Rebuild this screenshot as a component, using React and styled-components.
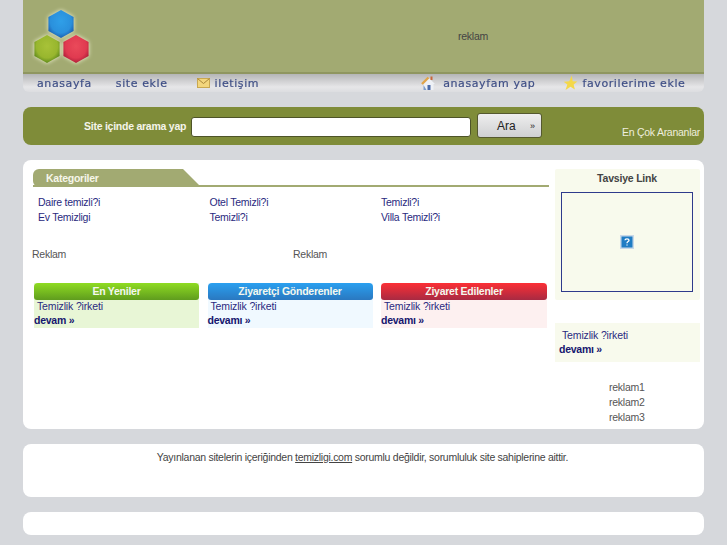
import React from "react";
import styled, { createGlobalStyle } from "styled-components";

const GlobalStyle = createGlobalStyle`
  html, body {
    margin: 0;
    padding: 0;
    height: 545px;
    overflow: hidden;
    background: #d6d8dc;
    font-family: "Liberation Sans", Arial, sans-serif;
    font-size: 10.5px;
    letter-spacing: -0.25px;
    color: #444;
  }
`;

const Page = styled.div`
  width: 681px;
  margin: 0 0 0 23px;
`;

const Header = styled.div`
  height: 72px;
  background: #a2aa72;
  display: flex;
`;

const LogoWrap = styled.div`
  width: 72px;
  padding: 7px 0 0 8px;
`;

const HeaderAd = styled.div`
  flex: 1;
  padding: 30px 0 0 355px;
  line-height: 12px;
  color: #444;
`;

const Nav = styled.div`
  height: 20px;
  display: flex;
  align-items: center;
  border-radius: 0 0 6px 6px;
  background: linear-gradient(#8f9660 0, #8f9660 2px, #b4b5b6 2px, #d0d0d2 9px, #e6e6e8 15px, #dcdde0 20px);
  font-family: "DejaVu Sans", Verdana, sans-serif;
  font-size: 11px;
  letter-spacing: 0.6px;
  color: #3f4f86;
  -webkit-text-stroke: 0.2px #3f4f86;
  padding-top: 2px;
  box-sizing: border-box;
`;

const NavItem = styled.span`
  display: flex;
  align-items: center;
  gap: ${(p) => p.$gap || 5}px;
  margin-left: ${(p) => p.$left}px;
  white-space: nowrap;
  filter: blur(0.25px);
`;

const SearchBar = styled.div`
  height: 38px;
  margin-top: 15px;
  background: #7f8c39;
  border-radius: 8px;
  display: flex;
  align-items: flex-start;
  position: relative;
`;

const SearchLabel = styled.label`
  margin: 13px 0 0 61px;
  width: 107px;
  font-weight: bold;
  line-height: 13px;
  color: #f4f4ea;
  white-space: nowrap;
`;

const SearchInput = styled.div`
  width: 278px;
  height: 18px;
  margin-top: 10px;
  background: #fff;
  border: 1px solid #4e5428;
  border-radius: 3px;
`;

const SearchButton = styled.div`
  width: 63px;
  height: 23px;
  margin: 6px 0 0 6px;
  border: 1px solid #55592f;
  border-radius: 3px;
  background: linear-gradient(#eeeeee, #cfd0d2);
  display: flex;
  align-items: center;
  font-size: 12px;
  letter-spacing: 0;
  color: #222;
`;

const ButtonLabel = styled.span`
  margin-left: 19px;
  width: 33px;
`;

const ButtonArrows = styled.span`
  font-size: 9px;
`;

const TopSearches = styled.span`
  position: absolute;
  right: 4px;
  bottom: 7px;
  line-height: 12px;
  color: #eeeede;
  letter-spacing: -0.27px;
`;

const Panel = styled.div`
  margin-top: ${(p) => p.$top}px;
  height: ${(p) => p.$height}px;
  background: #fff;
  border-radius: 8px;
`;

const MainPanel = styled(Panel)`
  display: flex;
  padding: 9px 4px 0 9px;
  box-sizing: border-box;
`;

const LeftColumn = styled.div`
  width: 517px;
`;

const RightColumn = styled.div`
  width: 145px;
  margin-left: 6px;
`;

const TabRow = styled.div`
  height: 18px;
  border-bottom: 2px solid #a2aa72;
  box-sizing: border-box;
  margin-left: 1px;
`;

const Tab = styled.div`
  width: 168px;
  height: 18px;
  background: #a2aa72;
  border-radius: 6px 6px 0 6px;
  clip-path: polygon(0 0, 150px 0, 168px 18px, 0 18px);
  color: #f6f6ea;
  font-weight: bold;
  line-height: 18px;
  padding-left: 13px;
  box-sizing: border-box;
`;

const CategoryGrid = styled.div`
  display: grid;
  grid-template-columns: repeat(3, 171.5px);
  margin: 8px 0 0 6px;
`;

const CategoryLink = styled.a`
  height: 14.5px;
  line-height: 14.5px;
  color: #2a2a80;
`;

const AdRow = styled.div`
  display: flex;
  margin-top: 23px;
  line-height: 14px;
  color: #555;
`;

const AdSlot = styled.span`
  flex: 0 0 261px;
`;

const BoxRow = styled.div`
  display: flex;
  gap: 8.5px;
  margin: 22px 0 0 2px;
`;

const Box = styled.div`
  flex: 0 0 ${(p) => p.$width}px;
  height: 45px;
  background: ${(p) => p.$tint};
`;

const BoxTitle = styled.div`
  height: 17px;
  border-radius: 4px 4px 3px 3px;
  background: linear-gradient(${(p) => p.$from}, ${(p) => p.$to});
  color: #f4f8ee;
  font-weight: bold;
  line-height: 16px;
  text-align: center;
`;

const EntryLink = styled.div`
  padding-left: ${(p) => p.$pad}px;
  margin-top: -1px;
  height: 14px;
  line-height: 14px;
  letter-spacing: -0.15px;
  color: #2a2a80;
`;

const MoreLink = styled.div`
  height: 14px;
  line-height: 14px;
  font-weight: bold;
  color: #16166e;
`;

const AdviceBox = styled.div`
  height: 131px;
  background: #f8faed;
  padding: 0 7px 0 6px;
  border-radius: 2px;
  box-sizing: border-box;
`;

const AdviceTitle = styled.div`
  height: 23px;
  line-height: 19px;
  text-align: center;
  font-weight: bold;
  letter-spacing: -0.2px;
  color: #444;
`;

const AdviceFrame = styled.div`
  height: 100px;
  border: 1px solid #2e3a8c;
  box-sizing: border-box;
  display: flex;
  align-items: center;
  justify-content: center;
`;

const SideEntry = styled.div`
  margin-top: 23px;
  height: 39px;
  background: #f8faed;
  padding: 6px 0 0 4px;
  box-sizing: border-box;
`;

const SideAds = styled.div`
  margin: 18px 0 0 54px;
  line-height: 15px;
  color: #555;
`;

const FooterText = styled.div`
  padding-top: 7px;
  text-align: center;
  line-height: 13px;
  color: #444;
  letter-spacing: -0.28px;
  margin-left: -2px;
`;

const FooterLink = styled.a`
  text-decoration: underline;
  color: #444;
`;

const LogoSvg = styled.svg`
  display: block;
  filter: drop-shadow(0 0 2px #f2f4d4) blur(0.4px);
`;

// logo: three hexagons
const hex = (cx, cy, r) => {
  const h = r * 0.9;
  return `${cx},${cy - r} ${cx + h},${cy - r / 2} ${cx + h},${cy + r / 2} ${cx},${cy + r} ${cx - h},${cy + r / 2} ${cx - h},${cy - r / 2}`;
};

const Logo = () => (
  <LogoSvg width="62" height="62" viewBox="0 0 62 62">
    <defs>
      <radialGradient id="blueHex" cx="0.5" cy="0.4" r="0.6">
        <stop offset="0" stopColor="#2f9fe8" />
        <stop offset="0.7" stopColor="#2a90dc" />
        <stop offset="1" stopColor="#1c5fb0" />
      </radialGradient>
      <radialGradient id="greenHex" cx="0.5" cy="0.4" r="0.6">
        <stop offset="0" stopColor="#a8c238" />
        <stop offset="0.7" stopColor="#98b62e" />
        <stop offset="1" stopColor="#5f8a1c" />
      </radialGradient>
      <radialGradient id="redHex" cx="0.5" cy="0.4" r="0.6">
        <stop offset="0" stopColor="#ea4a5a" />
        <stop offset="0.7" stopColor="#e03a50" />
        <stop offset="1" stopColor="#b0203a" />
      </radialGradient>
    </defs>
    <polygon points={hex(30, 17, 14)} fill="url(#blueHex)" />
    <polygon points={hex(16, 42, 14)} fill="url(#greenHex)" />
    <polygon points={hex(45, 42, 14)} fill="url(#redHex)" />
  </LogoSvg>
);

const MailIcon = () => (
  <svg width="13" height="10" viewBox="0 0 13 10">
    <rect x="0.5" y="0.5" width="12" height="9" fill="#f3d67c" stroke="#c9a850" />
    <path d="M0.5 0.5 L6.5 5.5 L12.5 0.5" fill="none" stroke="#a8863a" />
  </svg>
);

const HomeIcon = () => (
  <svg width="15" height="15" viewBox="0 0 15 15" stroke="none">
    <path d="M1 8 L7.5 1.5 L14 8 L12.5 8 L12.5 14 L2.5 14 L2.5 8 Z" fill="#eef1f6" />
    <path d="M7.5 1.5 L1 8" stroke="#e0a448" strokeWidth="2.4" />
    <path d="M2.5 9 L2.5 14 L5.5 14 Z" fill="#7c9cc8" />
    <rect x="6.5" y="9" width="3" height="5" fill="#4a6aa8" />
    <rect x="9.5" y="0.5" width="2" height="3.5" fill="#c9673a" />
  </svg>
);

const StarIcon = () => (
  <svg width="15" height="16" viewBox="0 0 24 24" stroke="none">
    <path d="M14 0 L15.5 9 L23 9.5 L17 14.5 L19 22.5 L12 18 L4 23 L7 14.5 L1 10 L10 9 Z" fill="#f4d84a" />
  </svg>
);

const BrokenImage = () => (
  <svg width="14" height="14" viewBox="0 0 14 14">
    <rect x="0" y="0" width="14" height="14" fill="#c8d8e8" />
    <rect x="1.5" y="1.5" width="11" height="11" fill="#1f7cc4" />
    <path d="M5 5.2 C5 3.4 9 3.4 9 5.2 C9 6.6 7 6.4 7 8.2 M7 9.4 L7 10.6" fill="none" stroke="#fff" strokeWidth="1.3" />
  </svg>
);

const categories = ["Daire temizli?i", "Otel Temizli?i", "Temizli?i", "Ev Temizligi", "Temizli?i", "Villa Temizli?i"];

const boxes = [
  { title: "En Yeniler", from: "#8fdc22", to: "#5f9c1e", tint: "#e8f6d6", more: "devam »", width: 165 },
  { title: "Ziyaretçi Gönderenler", from: "#2aa0f0", to: "#2a78c0", tint: "#f0f9ff", more: "devamı »", width: 165 },
  { title: "Ziyaret Edilenler", from: "#fc2f35", to: "#a82a42", tint: "#fdf0f0", more: "devamı »", width: 166 },
];

export default function App() {
  return (
    <Page>
      <GlobalStyle />
      <Header>
        <LogoWrap>
          <Logo />
        </LogoWrap>
        <HeaderAd>reklam</HeaderAd>
      </Header>
      <Nav>
        <NavItem $left={14}>anasayfa</NavItem>
        <NavItem $left={24}>site ekle</NavItem>
        <NavItem $left={29}>
          <MailIcon />
          iletişim
        </NavItem>
        <NavItem $left={162} $gap={7}>
          <HomeIcon />
          anasayfam yap
        </NavItem>
        <NavItem $left={28} $gap={4}>
          <StarIcon />
          favorilerime ekle
        </NavItem>
      </Nav>

      <SearchBar>
        <SearchLabel>Site içinde arama yap</SearchLabel>
        <SearchInput />
        <SearchButton>
          <ButtonLabel>Ara</ButtonLabel>
          <ButtonArrows>»</ButtonArrows>
        </SearchButton>
        <TopSearches>En Çok Arananlar</TopSearches>
      </SearchBar>

      <MainPanel $top={15} $height={269}>
        <LeftColumn>
          <TabRow>
            <Tab>Kategoriler</Tab>
          </TabRow>
          <CategoryGrid>
            {categories.map((c, i) => (
              <CategoryLink key={i}>{c}</CategoryLink>
            ))}
          </CategoryGrid>
          <AdRow>
            <AdSlot>Reklam</AdSlot>
            <AdSlot>Reklam</AdSlot>
          </AdRow>
          <BoxRow>
            {boxes.map((b) => (
              <Box key={b.title} $tint={b.tint} $width={b.width}>
                <BoxTitle $from={b.from} $to={b.to}>
                  {b.title}
                </BoxTitle>
                <EntryLink $pad={3}>Temizlik ?irketi</EntryLink>
                <MoreLink>{b.more}</MoreLink>
              </Box>
            ))}
          </BoxRow>
        </LeftColumn>
        <RightColumn>
          <AdviceBox>
            <AdviceTitle>Tavsiye Link</AdviceTitle>
            <AdviceFrame>
              <BrokenImage />
            </AdviceFrame>
          </AdviceBox>
          <SideEntry>
            <EntryLink $pad={3}>Temizlik ?irketi</EntryLink>
            <MoreLink>devamı »</MoreLink>
          </SideEntry>
          <SideAds>
            reklam1
            <br />
            reklam2
            <br />
            reklam3
          </SideAds>
        </RightColumn>
      </MainPanel>

      <Panel $top={15} $height={53}>
        <FooterText>
          Yayınlanan sitelerin içeriğinden <FooterLink>temizligi.com</FooterLink> sorumlu değildir, sorumluluk site sahiplerine aittir.
        </FooterText>
      </Panel>
      <Panel $top={15} $height={23} />
    </Page>
  );
}
